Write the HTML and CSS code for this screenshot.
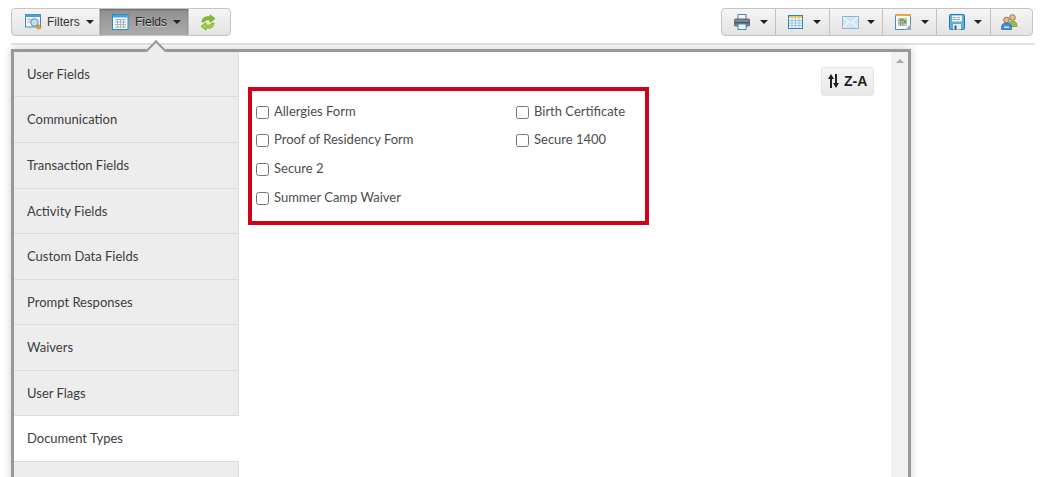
FILE: index.html
```html
<!DOCTYPE html>
<html lang="en">
<head>
<meta charset="utf-8">
<title>Report fields</title>
<link rel="stylesheet" href="styles.css">
</head>
<body>
<div class="toolbar">
  <div class="btn-group">
    <button class="tb filters">
      <svg class="ic" width="19" height="16" viewBox="0 0 19 16"><rect x="1.5" y=".5" width="15" height="12.5" fill="#eef4f9" stroke="#3a8ec6"/><rect x="1.5" y=".5" width="15" height="2.5" fill="#4a9fd6"/><rect x="3.5" y="5" width="4" height="1" fill="#aab"/><rect x="3.5" y="7.5" width="3" height="1" fill="#aab"/><circle cx="10.5" cy="8.5" r="3.6" fill="#bfe0f2" stroke="#7f98a8" stroke-width="1.2"/><circle cx="14.8" cy="13" r="2.1" fill="#eda81f" stroke="#a9721a" stroke-width=".6"/></svg>
      <span>Filters</span><i class="caret"></i>
    </button>
    <button class="tb fields active">
      <svg class="ic" width="17" height="16" viewBox="0 0 17 16"><rect x=".5" y=".5" width="15.5" height="15" fill="#f8fafc" stroke="#2c8ac6"/><rect x="1" y="1" width="14.5" height="2.5" fill="#4aa3dc"/><path d="M3 5.500h11M3 8h11M3 10.500h11M3 13h11M5.500 5v9M8.500 5v9M11.500 5v9" stroke="#aab4be" fill="none"/></svg>
      <span>Fields</span><i class="caret"></i>
    </button>
    <button class="tb refresh">
      <svg width="16" height="17" viewBox="0 0 16 17"><path d="M2 8C2 4 5 2 10 3V.8L15 4.700 10 8.400V6C7 5.500 5 6 4 8Z" fill="#8cc11f" stroke="#5f9410" stroke-width=".6"/><path d="M14 9C14 13 11 15 6 14V16.200L1 12.300 6 8.600V11C9 11.500 11 11 12 9Z" fill="#a6d232" stroke="#5f9410" stroke-width=".6"/></svg>
    </button>
  </div>
  <div class="btn-group">
    <button class="tb act a-print">
      <svg width="16" height="16" viewBox="0 0 16 16"><rect x="4" y=".5" width="8" height="5" fill="#f2f6fa" stroke="#3b8cc4"/><rect x=".5" y="5" width="15" height="7" rx="1" fill="#7e8790" stroke="#666"/><rect x="1" y="8" width="14" height="1.5" fill="#4f565c"/><rect x="4" y="10" width="8" height="5.500" fill="#f5f8fb" stroke="#3b8cc4"/></svg>
      <i class="caret"></i>
    </button>
    <button class="tb act a-grid">
      <svg width="15" height="14" viewBox="0 0 15 14"><rect x=".5" y=".5" width="14" height="13" fill="#f4f8fb" stroke="#2c86bd"/><rect x="1" y="1" width="13" height="1.8" fill="#f2c14e"/><path d="M1 5.500h13M1 8h13M1 10.500h13M4 3v10M7.500 3v10M11 3v10" stroke="#9cc3de" fill="none"/></svg>
      <i class="caret"></i>
    </button>
    <button class="tb act a-mail">
      <svg width="17" height="13" viewBox="0 0 17 13"><rect x=".5" y=".5" width="16" height="12" fill="#cfe6f5" stroke="#8fb4cd"/><path d="M1 1l7.500 6.500L16 1M1 12l5.500-6.500M16 12l-5.500-6.500" stroke="#fff" fill="none"/></svg>
      <i class="caret"></i>
    </button>
    <button class="tb act a-cal">
      <svg width="16" height="16" viewBox="0 0 16 16"><rect x=".5" y=".5" width="15" height="15" fill="#f6f8f5" stroke="#3f93c7"/><rect x="0" y="0" width="16" height="2" fill="#f0a63a"/><rect x="3" y="4" width="9" height="8" fill="#c4cdc0"/><path d="M3 6.500h9M3 9h9M5.500 4v8M8 4v8" stroke="#8f9a8a" fill="none"/><rect x="6" y="5" width="2" height="2" fill="#66a81e"/><rect x="9" y="7" width="2" height="2" fill="#66a81e"/><path d="M16 10v6h-6z" fill="#9aa8b3"/></svg>
      <i class="caret"></i>
    </button>
    <button class="tb act a-save">
      <svg width="16" height="16" viewBox="0 0 16 16"><rect x=".5" y=".5" width="15" height="15" rx="1" fill="#5aaee0" stroke="#1f78b5"/><rect x="3" y="1.500" width="10" height="6" fill="#f3f6f8"/><path d="M4 3.500h3M8 3.500h3M4 5.500h7" stroke="#9aa"/><rect x="4" y="10" width="8" height="5.500" fill="#e9eef2"/><rect x="5.500" y="11.500" width="2" height="4" fill="#555"/></svg>
      <i class="caret"></i>
    </button>
    <button class="tb users">
      <svg width="17" height="16" viewBox="0 0 17 16"><circle cx="11.500" cy="3.500" r="2.800" fill="#e9bd8c" stroke="#7b4c1f" stroke-width=".7"/><path d="M8 11c0-3 1.500-4 3.500-4s4 1 4.500 4v1.500H8z" fill="#8fbf4f" stroke="#5c8a2a" stroke-width=".6"/><circle cx="5.500" cy="6" r="2.800" fill="#e9bd8c" stroke="#7b4c1f" stroke-width=".7"/><path d="M.5 13.500c0-3 1.500-4.500 5-4.500s5 1.500 5 4.500v2h-10z" fill="#3f8fd0" stroke="#1f5f97" stroke-width=".6"/><rect x="3" y="12.500" width="5" height="1.500" fill="#dcecf8"/></svg>
    </button>
  </div>
</div>
<hr class="rule">
<div class="panel">
  <span class="pointer"></span>
  <nav class="side">
    <a class="item">User Fields</a>
    <a class="item">Communication</a>
    <a class="item">Transaction Fields</a>
    <a class="item">Activity Fields</a>
    <a class="item">Custom Data Fields</a>
    <a class="item">Prompt Responses</a>
    <a class="item">Waivers</a>
    <a class="item">User Flags</a>
    <a class="item current">Document Types</a>
    <a class="item"></a>
  </nav>
  <main class="content">
    <div class="sort-row">
      <button class="sort"><svg width="11" height="14" viewBox="0 0 11 14"><path d="M3 14V2" fill="none" stroke="#222" stroke-width="2"/><path d="M0 5 3 0l3 5z" fill="#222"/><path d="M8 0v12" fill="none" stroke="#222" stroke-width="2"/><path d="M5 9l3 5 3-5z" fill="#222"/></svg>Z-A</button>
    </div>
    <div class="highlight">
      <label class="opt"><input type="checkbox"><span>Allergies Form</span></label>
      <label class="opt"><input type="checkbox"><span>Birth Certificate</span></label>
      <label class="opt"><input type="checkbox"><span>Proof of Residency Form</span></label>
      <label class="opt"><input type="checkbox"><span>Secure 1400</span></label>
      <label class="opt"><input type="checkbox"><span>Secure 2</span></label>
      <label class="opt empty"></label>
      <label class="opt"><input type="checkbox"><span>Summer Camp Waiver</span></label>
    </div>
  </main>
  <div class="scroll"><i class="up"></i></div>
</div>
</body>
</html>
```
FILE: styles.css
```css
* { box-sizing: border-box; }
html, body { height: 100%; }
body {
  margin: 0;
  padding: 8px 17px 0 11px;
  overflow: hidden;
  background: #fff;
  font-family: Lato, "Liberation Sans", sans-serif;
  font-size: 13px;
  color: #333;
}
.toolbar {
  display: flex;
  justify-content: space-between;
  padding-right: 2px;
}
.btn-group {
  display: flex;
  height: 28px;
  border: 1px solid #c4c4c4;
  border-radius: 4px;
  background: linear-gradient(#f5f5f5, #e3e3e3);
}
.tb {
  display: flex;
  align-items: center;
  height: 100%;
  margin: 0;
  padding: 0;
  border: 0;
  border-right: 1px solid #c0c0c0;
  background: none;
  font: 12px "Liberation Sans", Arial, sans-serif;
  color: #333;
}
.btn-group .tb:last-child { border-right: 0; }
.filters { width: 88px; padding-left: 12px; }
.filters span { margin-left: 4px; }
.filters .caret { margin-left: 6px; }
.fields { width: 89px; padding-left: 12px; }
.fields span { margin-left: 6px; }
.fields .caret { margin-left: 6px; }
.refresh { width: 41px; padding-left: 11px; }
.active {
  background: linear-gradient(#8f8f8f, #acacac);
  box-shadow: inset 0 1px 2px rgba(0, 0, 0, .25);
  text-shadow: 0 1px 0 rgba(255, 255, 255, .5);
  color: #222;
}
.act { width: 54px; padding-left: 12px; }
.a-print .caret, .a-grid .caret, .a-cal .caret { margin-left: 10px; }
.a-mail { width: 53px; }
.a-mail .caret { margin-left: 8px; }
.a-save .caret { margin-left: 9px; }
.users { width: 41px; padding-left: 10px; }
.caret {
  display: block;
  width: 0;
  height: 0;
  border-left: 4px solid transparent;
  border-right: 4px solid transparent;
  border-top: 4px solid #222;
}
.rule {
  height: 2px;
  margin: 7px 0 4px;
  border: 0;
  background: #e2e2e2;
}
.panel {
  position: relative;
  display: flex;
  width: 900px;
  height: 520px;
  border: 3px solid #999;
  background: #fff;
  box-shadow: 0 0 8px rgba(0, 0, 0, .2);
}
.pointer {
  position: absolute;
  left: 135px;
  top: -9px;
  width: 14px;
  height: 14px;
  transform: rotate(45deg);
  background: #ededed;
  border-left: 2px solid #999;
  border-top: 2px solid #999;
}
.side {
  flex: none;
  width: 225px;
  background: #ededed;
  border-right: 1px solid #e0e0e0;
  position: relative;
}
.item {
  display: flex;
  align-items: center;
  height: 45.5px;
  padding-left: 13px;
  border-bottom: 1px solid #dcdcdc;
  color: #3d3d3d;
}
.item:first-child { height: 45px; }
.item:nth-child(2) { height: 46px; padding-bottom: 2px; }
.current { background: #fff; margin-right: -1px; position: relative; }
.content {
  flex: 1;
  min-width: 0;
  padding: 15px 17px 0 9px;
}
.sort-row {
  display: flex;
  justify-content: flex-end;
  height: 20px;
}
.sort {
  display: flex;
  align-items: center;
  gap: 5px;
  width: 53px;
  height: 29px;
  margin: 0;
  padding: 0 0 1px 6px;
  border: 1px solid #e4e4e4;
  border-radius: 3px;
  background: linear-gradient(#f5f5f5, #e8e8e8);
  font: bold 14px "Liberation Sans", Arial, sans-serif;
  color: #222;
  position: relative;
  z-index: 1;
}
.highlight {
  display: grid;
  grid-template-columns: 260px 1fr;
  grid-auto-rows: 28.7px;
  width: 401px;
  height: 138px;
  padding: 5.4px 0 0 4px;
  border: 4px solid #d0021b;
}
.opt {
  display: flex;
  align-items: center;
  color: #4d4d4d;
}
.opt input {
  flex: none;
  width: 13px;
  height: 13px;
  margin: 3px 5px 0 0;
}
.scroll {
  flex: none;
  width: 17px;
  background: #f1f1f1;
  display: flex;
  justify-content: center;
  padding-top: 7px;
}
.up {
  width: 0;
  height: 0;
  border-left: 4px solid transparent;
  border-right: 4px solid transparent;
  border-bottom: 4px solid #a8a8a8;
}
```
